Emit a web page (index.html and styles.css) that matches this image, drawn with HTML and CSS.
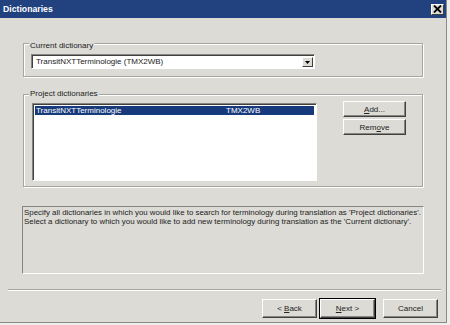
FILE: index.html
```html
<!DOCTYPE html>
<html>
<head>
<meta charset="utf-8">
<link rel="stylesheet" href="styles.css">
</head>
<body>
<div class="window">
  <div class="titlebar">
    <span class="title">Dictionaries</span>
    <span class="close"><svg width="9" height="8" viewBox="0 0 9 8"><path d="M1 0.5 L8 7.5 M8 0.5 L1 7.5" stroke="#000" stroke-width="1.8"/></svg></span>
  </div>
  <div class="content">
    <div class="group group-current">
      <span class="group-label">Current dictionary</span>
      <div class="combo">
        <span class="combo-text">TransitNXTTerminologie (TMX2WB)</span>
        <span class="combo-btn"><svg width="5" height="3" viewBox="0 0 5 3"><path d="M0 0 H5 L2.5 3 Z" fill="#000"/></svg></span>
      </div>
    </div>
    <div class="group group-project">
      <span class="group-label">Project dictionaries</span>
      <div class="project-row">
        <div class="listbox">
          <div class="item selected"><span class="item-name">TransitNXTTerminologie</span><span class="item-type">TMX2WB</span></div>
        </div>
        <div class="side-buttons">
          <div class="btn btn-side"><span><u>A</u>dd...</span></div>
          <div class="btn btn-side"><span>Rem<u>o</u>ve</span></div>
        </div>
      </div>
    </div>
    <div class="description">
      <div>Specify all dictionaries in which you would like to search for terminology during translation as 'Project dictionaries'.</div>
      <div>Select a dictionary to which you would like to add new terminology during translation as the 'Current dictionary'.</div>
    </div>
  </div>
  <div class="separator"></div>
  <div class="footer">
    <div class="btn btn-foot"><span>&lt; <u>B</u>ack</span></div>
    <div class="btn btn-foot btn-default"><span><u>N</u>ext &gt;</span></div>
    <div class="btn btn-foot btn-cancel"><span>Cancel</span></div>
  </div>
</div>
</body>
</html>
```
FILE: styles.css
```css
html, body {
  margin: 0;
  padding: 0;
  background: #eeeeec;
}
body {
  font-family: "Liberation Sans", Arial, sans-serif;
  font-size: 8px;
  color: #000;
}
.window {
  width: 446px;
  height: 322px;
  background: #dcdbd6;
  border-right: 1px solid #8a8985;
  border-bottom: 1px solid #8a8985;
  display: flex;
  flex-direction: column;
}
.titlebar {
  height: 18px;
  background: #21427e;
  display: flex;
  align-items: center;
  justify-content: space-between;
  padding: 0 2px 0 3px;
}
.title {
  color: #fff;
  font-weight: bold;
  font-size: 8.7px;
}
.close {
  width: 11px;
  height: 9px;
  background: #dcdbd6;
  border: 1px solid;
  border-color: #fff #404040 #404040 #fff;
  display: flex;
  align-items: center;
  justify-content: center;
}
.content {
  padding: 25px 23px 0 23px;
}
.group {
  border: 1px solid #a6a5a0;
  box-shadow: inset 1px 1px 0 #fff, 1px 1px 0 #fff;
}
.group-label {
  display: block;
  width: fit-content;
  margin: -6px 0 0 -2px;
  padding: 0 1px;
  height: 10px;
  line-height: 10px;
  background: #dcdbd6;
  color: #222;
}
.group-project .group-label {
  margin-left: -3px;
}
.group-current {
  padding: 3px 7px 7px 7px;
}
.combo {
  margin-top: 3px;
  width: 284px;
  height: 15px;
  box-sizing: border-box;
  background: #fff;
  border: 1px solid;
  border-color: #86857f #fff #fff #86857f;
  box-shadow: inset 1px 1px 0 #404040;
  display: flex;
  align-items: center;
  justify-content: space-between;
  padding: 1px 1px 0 4px;
}
.combo-text {
  line-height: 12px;
  color: #222;
}
.combo-btn {
  width: 11px;
  height: 10px;
  box-sizing: border-box;
  background: #dcdbd6;
  border: 1px solid;
  border-color: #fff #404040 #404040 #fff;
  display: flex;
  align-items: center;
  justify-content: center;
}
.group-project {
  margin-top: 17px;
  padding: 0 7px 5px 8px;
}
.project-row {
  display: flex;
  align-items: flex-start;
}
.listbox {
  margin-top: 4px;
  width: 285px;
  height: 78px;
  box-sizing: border-box;
  background: #fff;
  border: 1px solid;
  border-color: #86857f #fff #fff #86857f;
  box-shadow: inset 1px 1px 0 #404040;
  padding: 2px 2px 0 2px;
}
.item {
  display: flex;
  height: 9px;
  line-height: 9px;
  padding-left: 1px;
}
.item.selected {
  background: #173a7c;
  color: #fff;
}
.item-name {
  width: 190px;
}
.side-buttons {
  margin-top: 2px;
  margin-left: 26px;
  display: flex;
  flex-direction: column;
  gap: 2px;
}
.btn {
  box-sizing: border-box;
  background: #dcdbd6;
  border: 1px solid;
  border-color: #fff #404040 #404040 #fff;
  box-shadow: inset -1px -1px 0 #86857f;
  display: flex;
  align-items: center;
  justify-content: center;
  color: #222;
  white-space: pre;
}
.btn u {
  text-decoration-thickness: 1px;
  text-underline-offset: 1px;
}
.btn-side {
  width: 63px;
  height: 16px;
}
.description {
  margin: 19px -1px 0 -1px;
  height: 68px;
  box-sizing: border-box;
  border: 1px solid;
  border-color: #86857f #fff #fff #86857f;
  padding: 1px 1px 0 1px;
  font-size: 7.9px;
  line-height: 9px;
  color: #222;
  white-space: nowrap;
  overflow: hidden;
}
.separator {
  margin: 15px 5px 0 8px;
  height: 1px;
  background: #a6a5a0;
  border-bottom: 1px solid #fff;
}
.footer {
  margin-top: 8px;
  display: flex;
  justify-content: flex-end;
  padding-right: 8px;
}
.btn-foot {
  width: 55px;
  height: 19px;
}
.btn-default {
  margin-left: 3px;
  outline: 1px solid #000;
  outline-offset: 0;
}
.btn-cancel {
  margin-left: 8px;
}
```
